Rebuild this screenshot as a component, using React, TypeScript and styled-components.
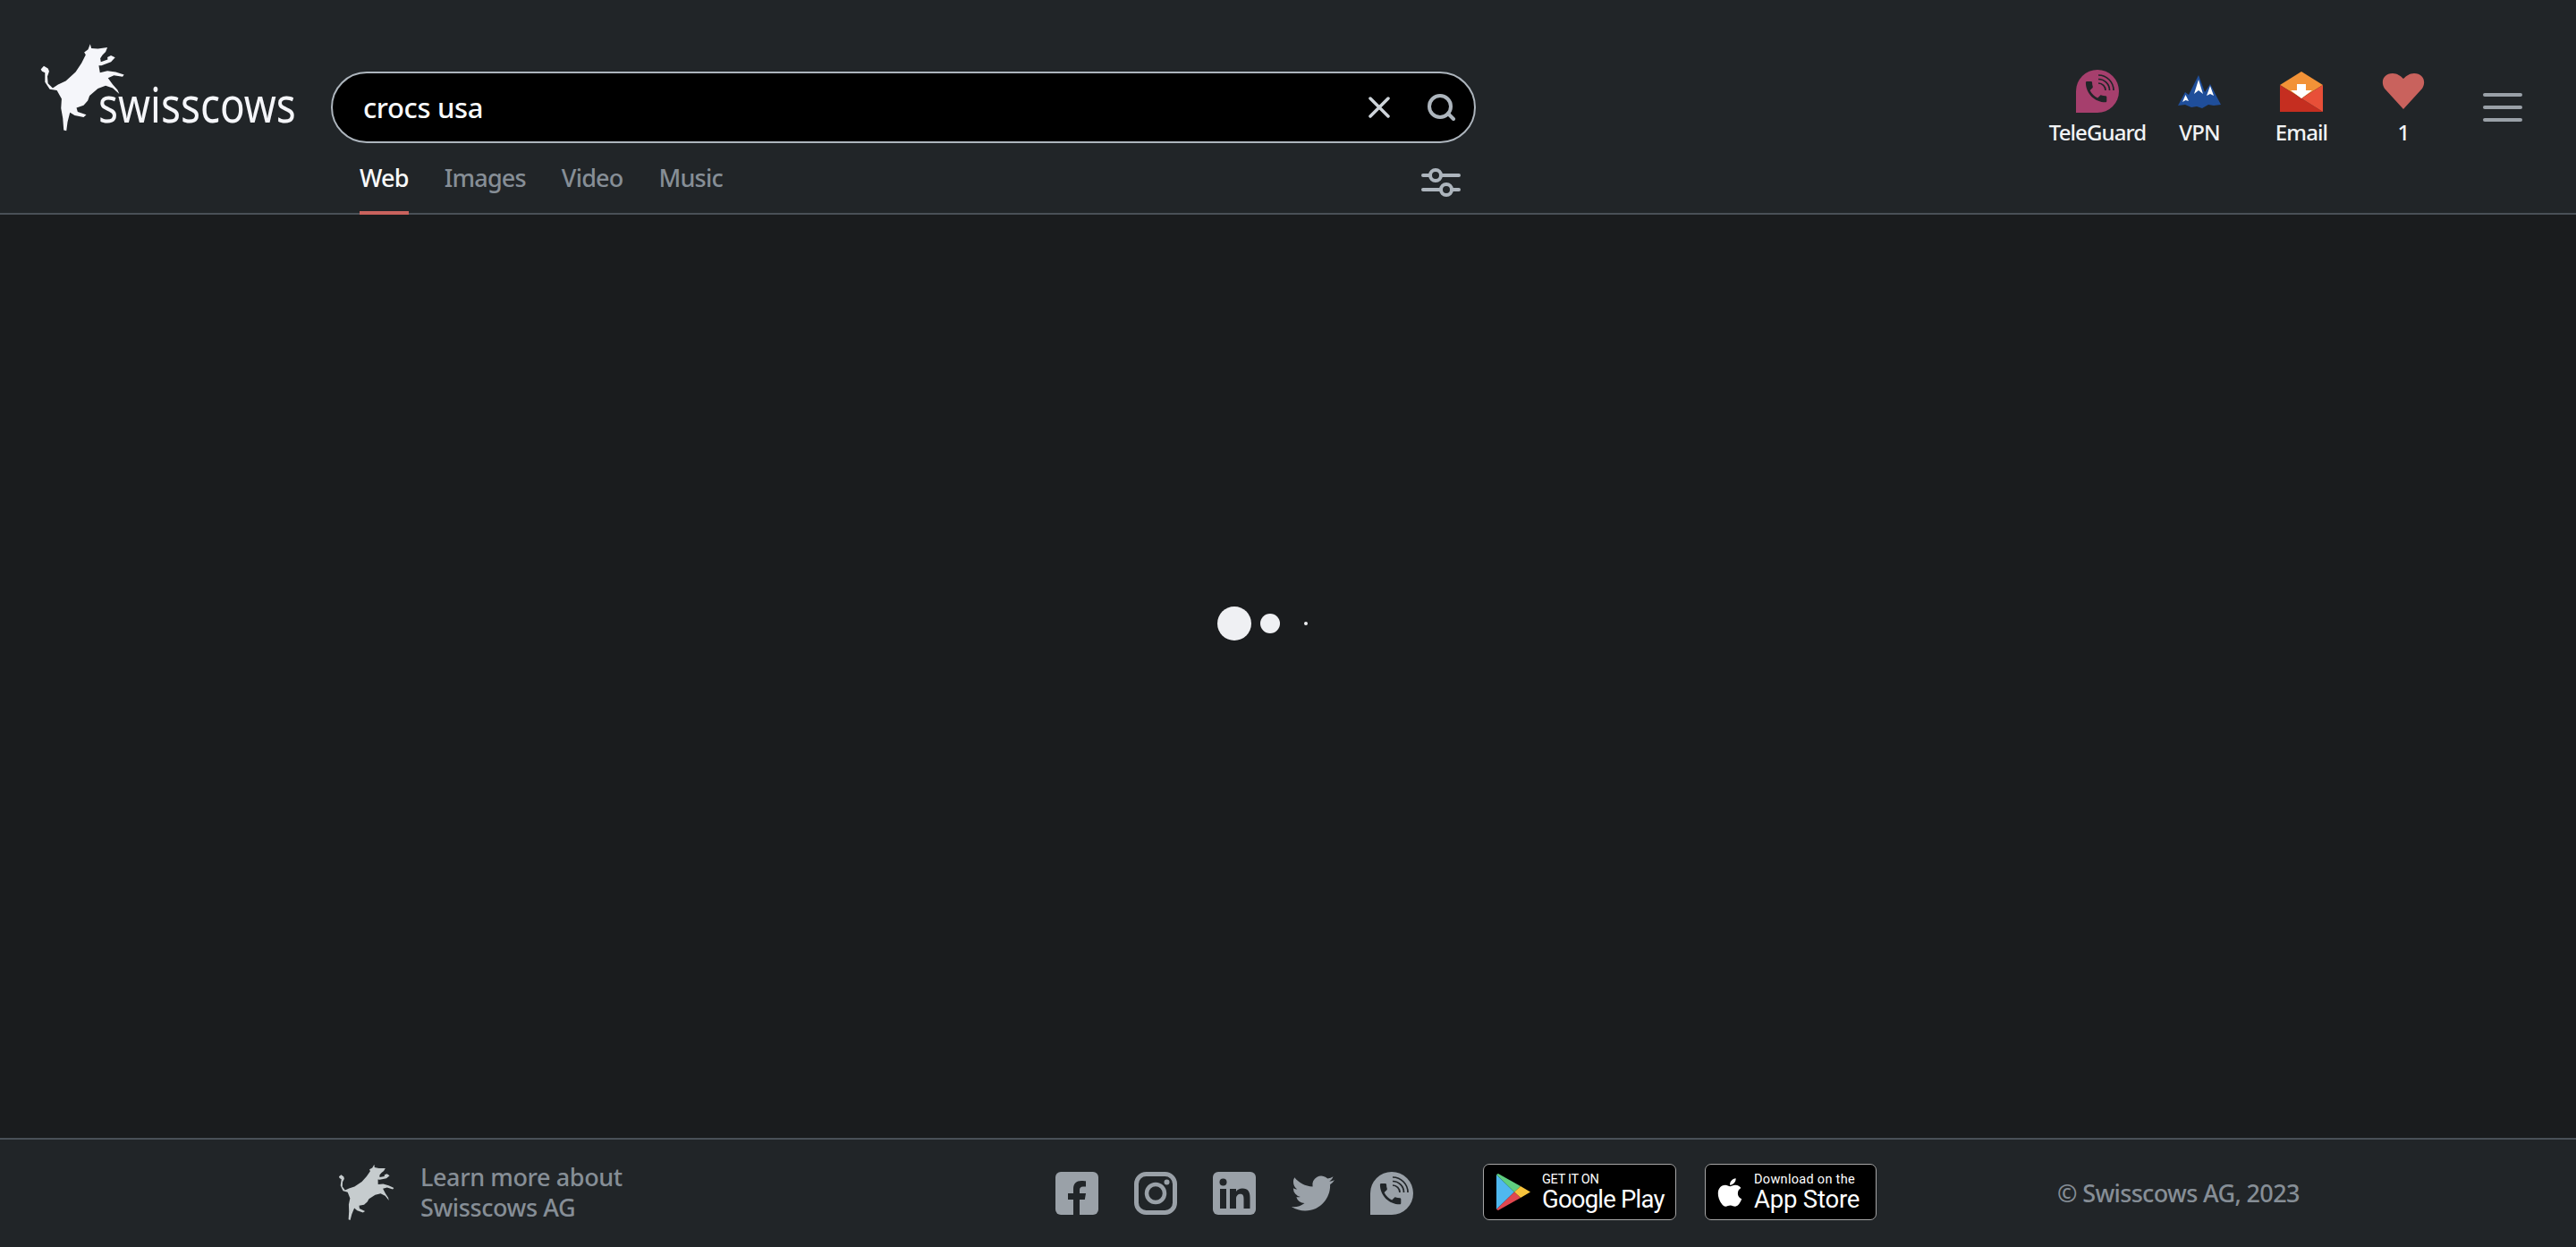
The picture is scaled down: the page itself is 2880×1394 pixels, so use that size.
import { createGlobalStyle, styled } from "styled-components";
import { FaApple } from "react-icons/fa";

const GlobalStyle = createGlobalStyle`
  html, body {
    margin: 0;
    padding: 0;
    background: #1a1c1e;
  }
  * {
    box-sizing: border-box;
  }
`;

const font = `"Noto Sans", "Open Sans", sans-serif`;
const COW =
  "M48 141 L58 130 L72 138 L76 148 L70 165 L72 188 L88 204 L106 192 L132 180 L165 150 L185 120 L199 92 L194 84 L207 74 L214 56 L218 70 L240 72 L272 67 L266 82 L256 92 L248 104 L250 116 L273 108 L272 100 L284 94 L298 101 L284 116 L252 128 L243 128 L247 152 L272 146 L300 150 L328 159 L323 166 L294 161 L274 170 L290 192 L306 210 L312 224 L290 204 L266 196 L240 206 L212 230 L206 246 L192 262 L168 270 L172 284 L201 294 L192 302 L162 296 L146 286 L138 318 L134 348 L125 346 L122 306 L116 272 L118 240 L102 212 L78 208 L62 184 L62 152 L52 148 Z";

const Page = styled.div`
  display: flex;
  flex-direction: column;
  min-height: 100vh;
  font-family: ${font};
  background: #1a1c1e;
`;

const Header = styled.header`
  display: flex;
  height: 240px;
  background: #212528;
  border-bottom: 2px solid #495057;
`;

const LogoColumn = styled.div`
  display: flex;
  align-items: flex-start;
  width: 370px;
  padding: 47px 0 0 43px;
`;

const LogoText = styled.span`
  margin: 32px 0 0 -31px;
  font-size: 54px;
  line-height: 74px;
  color: #f5f6fa;
  transform: scaleX(0.85);
  transform-origin: left center;
`;

const SearchColumn = styled.div`
  display: flex;
  flex-direction: column;
  width: 1280px;
  padding-top: 80px;
`;

const SearchBox = styled.div`
  display: flex;
  flex-shrink: 0;
  align-items: center;
  height: 80px;
  padding: 0 20px 0 34px;
  background: #000;
  border: 2px solid #adb5bd;
  border-radius: 40px;
`;

const SearchText = styled.span`
  flex: 1;
  font-size: 31px;
  font-weight: 500;
  letter-spacing: -0.35px;
  color: #f8f9fa;
`;

const SearchAction = styled.div`
  display: flex;
  margin-left: 42px;
`;

const TabRow = styled.nav`
  display: flex;
  flex-shrink: 0;
  align-items: stretch;
  gap: 40px;
  height: 80px;
  padding: 0 17px 0 32px;
`;

const Tab = styled.a<{ $active?: boolean }>`
  height: 80px;
  padding-top: 20px;
  font-size: 27px;
  font-weight: 500;
  line-height: 37px;
  letter-spacing: -0.8px;
  color: ${(p) => (p.$active ? "#f8f9fa" : "#868e96")};
  border-bottom: 4px solid ${(p) => (p.$active ? "#c9625d" : "transparent")};
`;

const FilterButton = styled.div`
  display: flex;
  margin: 28px 0 0 auto;
`;

const RightBlock = styled.div`
  display: flex;
  align-items: flex-start;
  margin-left: auto;
  padding: 78px 60px 0 0;
`;

const AppLink = styled.div`
  display: flex;
  flex-direction: column;
  align-items: center;
  width: 114px;
`;

const AppIcon = styled.div`
  display: flex;
  align-items: center;
  justify-content: center;
  height: 48px;
`;

const AppLabel = styled.span`
  margin-top: 7px;
  font-size: 24px;
  font-weight: 500;
  line-height: 30px;
  letter-spacing: -0.9px;
  white-space: nowrap;
  color: #f1f3f5;
`;

const MenuButton = styled.div`
  display: flex;
  flex-direction: column;
  gap: 10px;
  width: 44px;
  margin: 26px 0 0 32px;
`;

const MenuBar = styled.span`
  height: 4px;
  border-radius: 2px;
  background: #9aa1a8;
`;

const Main = styled.main`
  flex: 1;
  display: flex;
  align-items: center;
  justify-content: center;
  padding-bottom: 118px;
`;

const DotSlot = styled.div`
  display: flex;
  align-items: center;
  justify-content: center;
  width: 40px;
  height: 40px;
`;

const Dot = styled.span<{ $size: number }>`
  width: ${(p) => p.$size}px;
  height: ${(p) => p.$size}px;
  border-radius: 50%;
  background: #eff0f3;
`;

const Footer = styled.footer`
  display: grid;
  grid-template-columns: 802px 478px 642px auto;
  align-items: center;
  height: 122px;
  padding-left: 375px;
  background: #212528;
  border-top: 2px solid #495057;
`;

const About = styled.div`
  display: flex;
  align-items: center;
  gap: 29px;
  margin-bottom: 2px;
`;

const AboutText = styled.div`
  font-size: 27px;
  font-weight: 500;
  line-height: 34px;
  letter-spacing: -0.4px;
  color: #868e96;
`;

const Socials = styled.div`
  display: flex;
  gap: 40px;
  margin-left: 3px;
`;

const Stores = styled.div`
  display: flex;
  gap: 32px;
  margin: 0 0 3px 3px;
`;

const StoreBadge = styled.div<{ $width: number }>`
  display: flex;
  align-items: center;
  width: ${(p) => p.$width}px;
  height: 63px;
  padding-left: 14px;
  background: #000;
  border: 1px solid #a6a6a6;
  border-radius: 7px;
  color: #fff;
  font-family: "Roboto", sans-serif;
`;

const AppleMark = styled(FaApple)`
  flex-shrink: 0;
  margin-left: -5px;
`;

const StoreText = styled.div<{ $gap: number }>`
  display: flex;
  flex-direction: column;
  margin-left: ${(p) => p.$gap}px;
`;

const StoreSmall = styled.span<{ $tracking: number }>`
  font-size: 14.500px;
  line-height: 15px;
  letter-spacing: ${(p) => p.$tracking}px;
  white-space: nowrap;
`;

const StoreBig = styled.span<{ $tracking: number }>`
  font-size: 27.500px;
  line-height: 29px;
  letter-spacing: ${(p) => p.$tracking}px;
  white-space: nowrap;
`;

const Copyright = styled.div`
  margin: 0 0 2px 3px;
  font-size: 27px;
  font-weight: 500;
  letter-spacing: -0.65px;
  white-space: nowrap;
  color: #868e96;
`;

const CowMark = ({ size, color, tilt = 0 }: { size: number; color: string; tilt?: number }) => (
  <svg width={size} height={size * 1.04} viewBox="40 50 295 305" style={{ flexShrink: 0 }}>
    <path d={COW} fill={color} transform={`rotate(${tilt} 187 200)`} />
  </svg>
);

const TeleGuardIcon = ({ color, ink }: { color: string; ink: string }) => (
  <svg width="48" height="48" viewBox="0 0 48 48">
    <path d="M24 0a24 24 0 0 1 0 48H0V24A24 24 0 0 1 24 0z" fill={color} />
    <path
      transform="translate(7 9) scale(1.3)"
      d="M6.62 10.79c1.44 2.83 3.76 5.14 6.59 6.59l2.2-2.2c.27-.27.67-.36 1.02-.24 1.12.37 2.33.57 3.57.57.55 0 1 .45 1 1V20c0 .55-.45 1-1 1-9.39 0-17-7.61-17-17 0-.55.45-1 1-1h3.5c.55 0 1 .45 1 1 0 1.25.2 2.45.57 3.57.11.35.03.74-.25 1.02l-2.2 2.2z"
      fill={ink}
    />
    <g fill="none" stroke={ink} strokeWidth="1.7">
      <path d="M25 15a8 8 0 0 1 8 8" />
      <path d="M25 10.500a12.500 12.500 0 0 1 12.500 12.500" />
      <path d="M25 6a17 17 0 0 1 17 17" />
    </g>
  </svg>
);

const VpnIcon = () => (
  <svg width="48" height="37" viewBox="0 0 48 37">
    <path
      d="M0 34 L8 19 L12 22 L23 0 L30 19 L36 10 L48 33 L40 34 L34 33 L27 37 L21 35 L15 36 L8 33 Z"
      fill="#1f4e9a"
    />
    <path d="M23 5 L28 21 L23 17 L18 21 Z M36 12 L40 23 L36 21 L32 23 Z M8.500 22 L12 29 L8.500 28 L5 30 Z" fill="#fff" />
  </svg>
);

const EmailIcon = () => (
  <svg width="48" height="45" viewBox="0 0 48 45">
    <path d="M24 0 L48 15 L24 30 L0 15 Z" fill="#f29237" />
    <path d="M0 15 L48 45 H0 Z" fill="#c52e20" />
    <path d="M48 15 V45 L24 30 Z" fill="#e84f38" />
    <path d="M19 14 H29 V21 H36 L24 30 L12 21 H19 Z" fill="#fff" />
  </svg>
);

const HeartIcon = () => (
  <svg width="48" height="40" viewBox="0 0 48 40">
    <path
      d="M24 40 L3 17 C-2 9 2 0 12 0 C17 0 21 3 24 6 C27 3 31 0 36 0 C46 0 50 9 45 17 Z"
      fill="#c9625d"
    />
  </svg>
);

const GRAY = "#9aa1a8";
const INK = "#212528";

const FacebookIcon = () => (
  <svg width="48" height="48" viewBox="0 0 48 48">
    <rect width="48" height="48" rx="6" fill={GRAY} />
    <path d="M20 48V31h-6v-7h6v-5c0-6 3.500-9 9-9 2.500 0 5 .4 5 .4v6h-3c-3 0-4 1.800-4 3.800V24h7l-1.200 7H27v17z" fill={INK} />
  </svg>
);

const InstagramIcon = () => (
  <svg width="48" height="48" viewBox="0 0 48 48">
    <rect x="2.500" y="2.500" width="43" height="43" rx="11" fill="none" stroke={GRAY} strokeWidth="5" />
    <circle cx="24" cy="24" r="10" fill="none" stroke={GRAY} strokeWidth="4.500" />
    <circle cx="36.500" cy="11.500" r="3" fill={GRAY} />
  </svg>
);

const LinkedinIcon = () => (
  <svg width="48" height="48" viewBox="0 0 48 48">
    <rect width="48" height="48" rx="6" fill={GRAY} />
    <circle cx="11.500" cy="11.500" r="4" fill={INK} />
    <path d="M8 19h7v22H8z M19 19h7v3c1.300-2.200 4-3.600 7-3.600 6.500 0 8.500 4 8.500 10V41h-7V30c0-3-.8-5.200-3.500-5.200-3 0-5 2-5 5.400V41h-7z" fill={INK} />
  </svg>
);

const TwitterIcon = () => (
  <svg width="48" height="48" viewBox="0 0 24 24">
    <path
      d="M23.953 4.57a10 10 0 01-2.825.775 4.958 4.958 0 002.163-2.723c-.951.555-2.005.959-3.127 1.184a4.92 4.92 0 00-8.384 4.482C7.69 8.095 4.067 6.13 1.64 3.162a4.822 4.822 0 00-.666 2.475c0 1.71.87 3.213 2.188 4.096a4.904 4.904 0 01-2.228-.616v.06a4.923 4.923 0 003.946 4.827 4.996 4.996 0 01-2.212.085 4.936 4.936 0 004.604 3.417 9.867 9.867 0 01-6.102 2.105c-.39 0-.779-.023-1.17-.067a13.995 13.995 0 007.557 2.209c9.053 0 13.998-7.496 13.998-13.985 0-.21 0-.42-.015-.63A9.935 9.935 0 0024 4.59z"
      fill={GRAY}
    />
  </svg>
);

const PlayIcon = () => (
  <svg width="38" height="41" viewBox="0 0 38 41" style={{ flexShrink: 0 }}>
    <path d="M0 1 V40 L20 20.500 Z" fill="#4fb8ef" />
    <path d="M0 1 L2 0 L27 14 L20 20.500 Z" fill="#5fcf7f" />
    <path d="M27 14 L38 20.500 L27 27 L20 20.500 Z" fill="#f6c33c" />
    <path d="M0 40 L2 41 L27 27 L20 20.500 Z" fill="#e0474f" />
  </svg>
);

const tabs = ["Web", "Images", "Video", "Music"];

export default function App() {
  return (
    <Page>
      <GlobalStyle />
      <Header>
        <LogoColumn>
          <CowMark size={98} color="#f5f6fa" />
          <LogoText>swisscows</LogoText>
        </LogoColumn>
        <SearchColumn>
          <SearchBox>
            <SearchText>crocs usa</SearchText>
            <SearchAction>
              <svg width="24" height="24" viewBox="0 0 24 24">
                <path d="M2 2 L22 22 M22 2 L2 22" stroke="#ced4da" strokeWidth="3.500" strokeLinecap="round" />
              </svg>
            </SearchAction>
            <SearchAction>
              <svg width="32" height="30" viewBox="0 0 32 30">
                <circle cx="14" cy="14" r="12" fill="none" stroke="#adb5bd" strokeWidth="4" />
                <path d="M23 22 L29 28" stroke="#adb5bd" strokeWidth="4" strokeLinecap="round" />
              </svg>
            </SearchAction>
          </SearchBox>
          <TabRow>
            {tabs.map((tab, i) => (
              <Tab key={tab} $active={i === 0}>
                {tab}
              </Tab>
            ))}
            <FilterButton>
              <svg width="44" height="32" viewBox="0 0 44 32">
                <path d="M2 8 H42 M2 24 H42" stroke="#adb5bd" strokeWidth="4" strokeLinecap="round" />
                <circle cx="16" cy="8" r="6" fill="#212528" stroke="#adb5bd" strokeWidth="4" />
                <circle cx="28" cy="24" r="6" fill="#212528" stroke="#adb5bd" strokeWidth="4" />
              </svg>
            </FilterButton>
          </TabRow>
        </SearchColumn>
        <RightBlock>
          <AppLink>
            <AppIcon>
              <TeleGuardIcon color="#a63f6d" ink="#212528" />
            </AppIcon>
            <AppLabel>TeleGuard</AppLabel>
          </AppLink>
          <AppLink>
            <AppIcon>
              <VpnIcon />
            </AppIcon>
            <AppLabel>VPN</AppLabel>
          </AppLink>
          <AppLink>
            <AppIcon>
              <EmailIcon />
            </AppIcon>
            <AppLabel>Email</AppLabel>
          </AppLink>
          <AppLink>
            <AppIcon>
              <HeartIcon />
            </AppIcon>
            <AppLabel>1</AppLabel>
          </AppLink>
          <MenuButton>
            <MenuBar />
            <MenuBar />
            <MenuBar />
          </MenuButton>
        </RightBlock>
      </Header>
      <Main>
        {[38, 22, 4, 0].map((size, i) => (
          <DotSlot key={i}>
            <Dot $size={size} />
          </DotSlot>
        ))}
      </Main>
      <Footer>
        <About>
          <CowMark size={66} color="#c6ccce" tilt={8} />
          <AboutText>
            Learn more about
            <br />
            Swisscows AG
          </AboutText>
        </About>
        <Socials>
          <FacebookIcon />
          <InstagramIcon />
          <LinkedinIcon />
          <TwitterIcon />
          <TeleGuardIcon color={GRAY} ink={INK} />
        </Socials>
        <Stores>
          <StoreBadge $width={216}>
            <PlayIcon />
            <StoreText $gap={13}>
              <StoreSmall $tracking={-0.3}>GET IT ON</StoreSmall>
              <StoreBig $tracking={-0.8}>Google Play</StoreBig>
            </StoreText>
          </StoreBadge>
          <StoreBadge $width={192}>
            <AppleMark size={36} />
            <StoreText $gap={9}>
              <StoreSmall $tracking={0.3}>Download on the</StoreSmall>
              <StoreBig $tracking={-0.2}>App Store</StoreBig>
            </StoreText>
          </StoreBadge>
        </Stores>
        <Copyright>© Swisscows AG, 2023</Copyright>
      </Footer>
    </Page>
  );
}
